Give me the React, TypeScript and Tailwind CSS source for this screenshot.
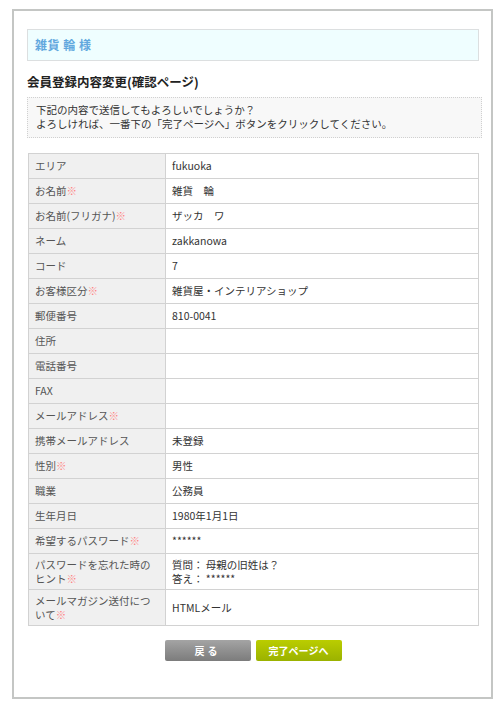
import React from 'react';

type Row = { label: string; required?: boolean; value: React.ReactNode; tall?: boolean };

const ROWS: Row[] = [
  { label: 'エリア', value: 'fukuoka' },
  { label: 'お名前', required: true, value: '雑貨　輪' },
  { label: 'お名前(フリガナ)', required: true, value: 'ザッカ　ワ' },
  { label: 'ネーム', value: 'zakkanowa' },
  { label: 'コード', value: '7' },
  { label: 'お客様区分', required: true, value: '雑貨屋・インテリアショップ' },
  { label: '郵便番号', value: '810-0041' },
  { label: '住所', value: '' },
  { label: '電話番号', value: '' },
  { label: 'FAX', value: '' },
  { label: 'メールアドレス', required: true, value: '' },
  { label: '携帯メールアドレス', value: '未登録' },
  { label: '性別', required: true, value: '男性' },
  { label: '職業', value: '公務員' },
  { label: '生年月日', value: '1980年1月1日' },
  { label: '希望するパスワード', required: true, value: '******' },
  {
    label: 'パスワードを忘れた時のヒント',
    required: true,
    tall: true,
    value: (
      <>
        質問：&nbsp;母親の旧姓は？
        <br />
        答え：&nbsp;******
      </>
    ),
  },
  { label: 'メールマガジン送付について', required: true, tall: true, value: 'HTMLメール' },
];

const font = { fontFamily: '"Noto Sans CJK JP", "Noto Sans", sans-serif' };

export default function App() {
  return (
    <div className="bg-white w-[500px] h-[705px] pt-[9px] pl-[12px]" style={font}>
      <div className="w-[481px] h-[690px] border-2 border-[#c4c6c4] pt-[18px] pl-[13px]">
        {/* Header */}
        <div className="w-[452px] h-[32px] border border-[#dcdfe0] bg-[#effeff] flex items-center pl-[7px]">
          <span className="text-[12px] font-bold text-[#62a8de] tracking-[0.5px]">雑貨 輪 様</span>
        </div>

        <h1 className="mt-[13px] text-[12.5px] font-bold text-[#222] leading-[16px]">
          会員登録内容変更(確認ページ)
        </h1>

        {/* Notice */}
        <div className="mt-[7px] w-[455px] h-[41px] border border-dotted border-[#d0d0d0] bg-[#f8f8f8] pl-[8px] pt-[5px] text-[10.5px] leading-[14px] text-[#333]">
          下記の内容で送信してもよろしいでしょうか？
          <br />
          よろしければ、一番下の「完了ページへ」ボタンをクリックしてください。
        </div>

        {/* Table */}
        <table className="mt-[15px] ml-px w-[451px] border-collapse text-[10.5px]">
          <tbody>
            {ROWS.map((r) => (
              <tr key={r.label} className={r.tall ? 'h-[36px]' : 'h-[25px]'}>
                <td className="w-[137px] border border-[#d2d2d2] bg-[#f0f0f0] pl-[6px] pr-[12px] text-[#555] leading-[14px] align-middle">
                  {r.label}
                  {r.required && <span className="text-[#ff8080]">※</span>}
                </td>
                <td className="border border-[#d2d2d2] bg-white pl-[6px] text-[#333] leading-[14px] align-middle">
                  {r.value}
                </td>
              </tr>
            ))}
          </tbody>
        </table>

        {/* Buttons */}
        <div className="mt-[14px] w-[452px] flex justify-center gap-[5px]">
          <button className="w-[86px] h-[21px] rounded-[2px] bg-gradient-to-b from-[#a4a4a4] to-[#7c7c7c] text-white text-[10px] font-bold tracking-[3px] flex items-center justify-center">
            戻る
          </button>
          <button className="w-[86px] h-[21px] rounded-[2px] bg-gradient-to-b from-[#bacd00] to-[#9bb200] text-white text-[10px] font-bold flex items-center justify-center">
            完了ページへ
          </button>
        </div>
      </div>
    </div>
  );
}
